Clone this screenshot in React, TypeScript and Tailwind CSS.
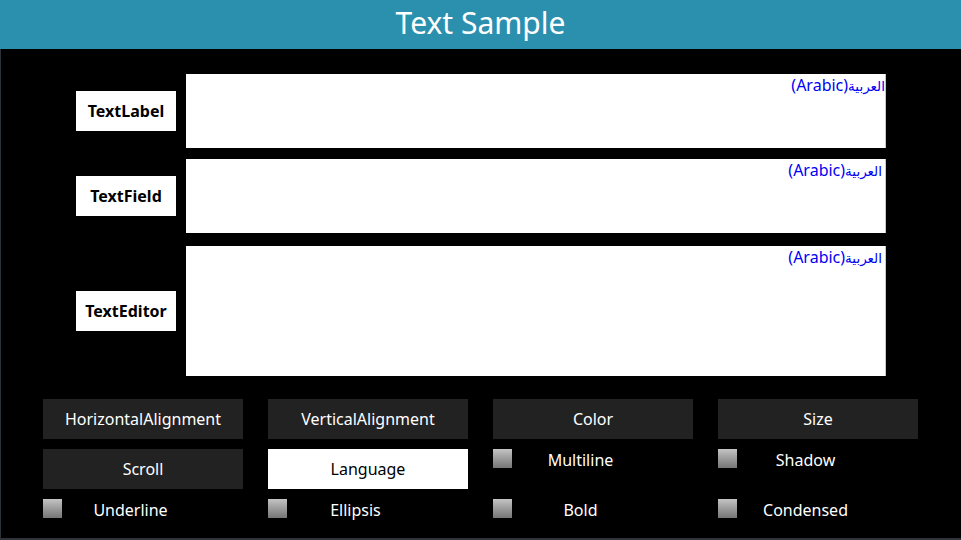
import React from "react";

const font = { fontFamily: '"Noto Sans", "Open Sans", "DejaVu Sans", sans-serif' };

function Row({ label, h, mt, pr }: { label: string; h: string; mt: string; pr: string }) {
  return (
    <div className={`flex items-center shrink-0 ${mt}`}>
      <div className="w-[100px] h-[40px] ml-[75px] bg-white flex items-center justify-center text-[16px] font-bold text-black">
        {label}
      </div>
      <div className={`ml-[10px] w-[700px] ${h} bg-white border-r border-[#c8c8c8] flex justify-end items-start`}>
        <div className={`text-[#0000f5] text-[16px] leading-[22px] ${pr} flex items-baseline`} dir="ltr">
          <span>(Arabic)</span>
          <span className="text-[13.5px]" style={{ fontFamily: '"DejaVu Sans", sans-serif' }}>العربية</span>
        </div>
      </div>
    </div>
  );
}

function Btn({ text, white }: { text: string; white?: boolean }) {
  return (
    <div
      className={`w-[200px] h-[40px] flex items-center justify-center text-[16px] ${
        white ? "bg-white text-black" : "bg-[#222222] text-white"
      }`}
    >
      {text}
    </div>
  );
}

function Check({ text }: { text: string }) {
  return (
    <div className="w-[200px] h-[30px] flex items-start">
      <div className="w-[19px] h-[19px] bg-gradient-to-b from-[#c4c4c4] to-[#767676]" />
      <div className="w-[137px] text-center text-white text-[16px] leading-[22px]">{text}</div>
    </div>
  );
}

export default function App() {
  return (
    <div className="w-[961px] h-[540px] bg-black flex flex-col overflow-hidden" style={font}>
      <div className="h-[49px] shrink-0 bg-[#2b90ae] flex items-center justify-center text-white text-[30px] leading-none pb-[3px]">
        Text Sample
      </div>
      <div className="flex-1 min-h-0 overflow-hidden flex flex-col border-l border-[#2c303a] border-b-2 border-b-[#30333c]">
        <Row label="TextLabel" h="h-[74px]" mt="mt-[25px]" pr="pr-0" />
        <Row label="TextField" h="h-[74px]" mt="mt-[11px]" pr="pr-[3px]" />
        <Row label="TextEditor" h="h-[130px]" mt="mt-[13px]" pr="pr-[3px]" />
        <div className="shrink-0 mt-[23px] ml-[42px] grid grid-cols-[200px_200px_200px_200px] gap-x-[25px] gap-y-[10px]">
          <Btn text="HorizontalAlignment" />
          <Btn text="VerticalAlignment" />
          <Btn text="Color" />
          <Btn text="Size" />
          <Btn text="Scroll" />
          <Btn text="Language" white />
          <Check text="Multiline" />
          <Check text="Shadow" />
          <Check text="Underline" />
          <Check text="Ellipsis" />
          <Check text="Bold" />
          <Check text="Condensed" />
        </div>
      </div>
    </div>
  );
}
